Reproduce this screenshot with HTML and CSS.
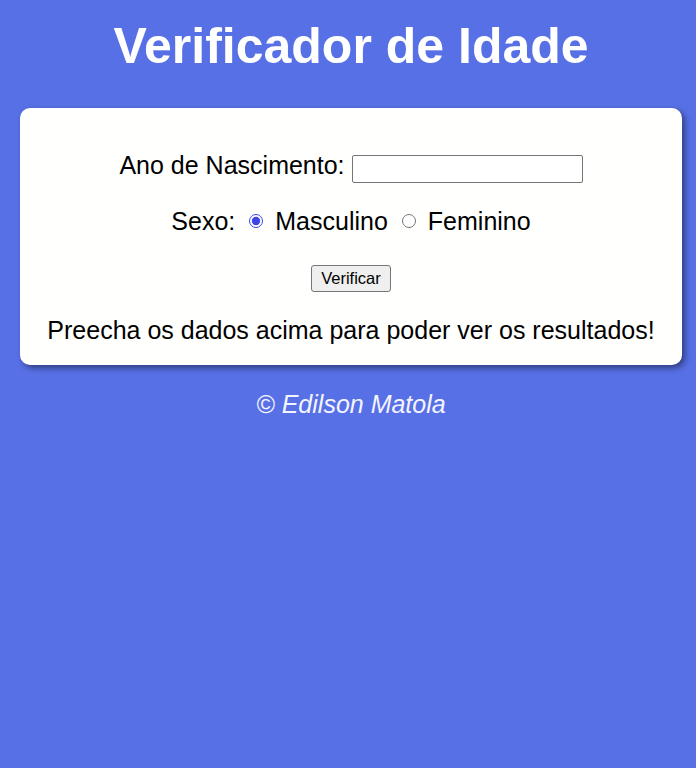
FILE: index.html
```html
<!DOCTYPE html>
<html lang="pt">
<head>
<meta charset="utf-8">
<title>Verificador de Idade</title>
<link rel="stylesheet" href="styles.css">
</head>
<body>
<header class="top">
  <h1 class="title">Verificador de Idade</h1>
</header>
<section class="card">
  <div class="row row-ano">
    <label class="label label-ano" for="ano">Ano de Nascimento:</label>
    <input class="field" type="number" id="ano">
  </div>
  <div class="row row-sexo">
    <span class="label">Sexo:</span>
    <input class="radio" type="radio" name="sexo" id="masc" checked>
    <label class="label" for="masc">Masculino</label>
    <input class="radio" type="radio" name="sexo" id="fem">
    <label class="label" for="fem">Feminino</label>
  </div>
  <div class="row row-btn">
    <button class="btn" type="button">Verificar</button>
  </div>
  <p class="result">Preecha os dados acima para poder ver os resultados!</p>
</section>
<footer class="foot">
  <p class="credit">&copy; Edilson Matola</p>
</footer>
</body>
</html>
```
FILE: styles.css
```css
html, body {
  margin: 0;
  padding: 0;
}
body {
  background: #5770e6;
  font-family: "Liberation Sans", Arial, sans-serif;
  min-height: 768px;
  padding: 0 14px 0 20px;
}
.top {
  padding-top: 16px;
  height: 108px;
  box-sizing: border-box;
}
.title {
  margin: 0;
  text-align: center;
  color: #ffffff;
  font-size: 50px;
  line-height: 60px;
  font-weight: bold;
}
.card {
  background: #fffffd;
  border-radius: 10px;
  box-shadow: 3px 3px 6px rgba(0, 0, 0, 0.45);
  padding: 43px 0 21px 0;
  display: flex;
  flex-direction: column;
  align-items: center;
}
.row {
  display: flex;
  align-items: center;
  justify-content: center;
  height: 36px;
}
.row-ano {
  margin-bottom: 16px;
}
.row-sexo {
  margin-bottom: 21px;
}
.row-btn {
  margin-bottom: 20px;
}
.label {
  font-size: 25px;
  color: #000;
}
.label-ano {
  margin-bottom: 8px;
}
.field {
  width: 231px;
  height: 28px;
  box-sizing: border-box;
  margin: 0 0 0 7px;
  border: 1px solid #767676;
  border-radius: 2px;
  -moz-appearance: textfield;
}
.field::-webkit-inner-spin-button,
.field::-webkit-outer-spin-button {
  -webkit-appearance: none;
  margin: 0;
}
.radio {
  width: 14px;
  height: 14px;
  margin: 0 12px 0 14px;
  accent-color: #3f44e6;
}
.btn {
  font-family: "Liberation Sans", Arial, sans-serif;
  font-size: 16.5px;
  width: 80px;
  height: 27px;
  padding: 0;
  background: #efefef;
  border: 1px solid #767676;
  border-radius: 3px;
  color: #000;
}
.result {
  margin: 0;
  font-size: 25px;
  line-height: 28px;
  color: #000;
}
.foot {
  text-align: center;
  padding-top: 23px;
}
.credit {
  margin: 0;
  color: #f4f4ff;
  font-style: italic;
  font-size: 25px;
  line-height: 32px;
}
```
